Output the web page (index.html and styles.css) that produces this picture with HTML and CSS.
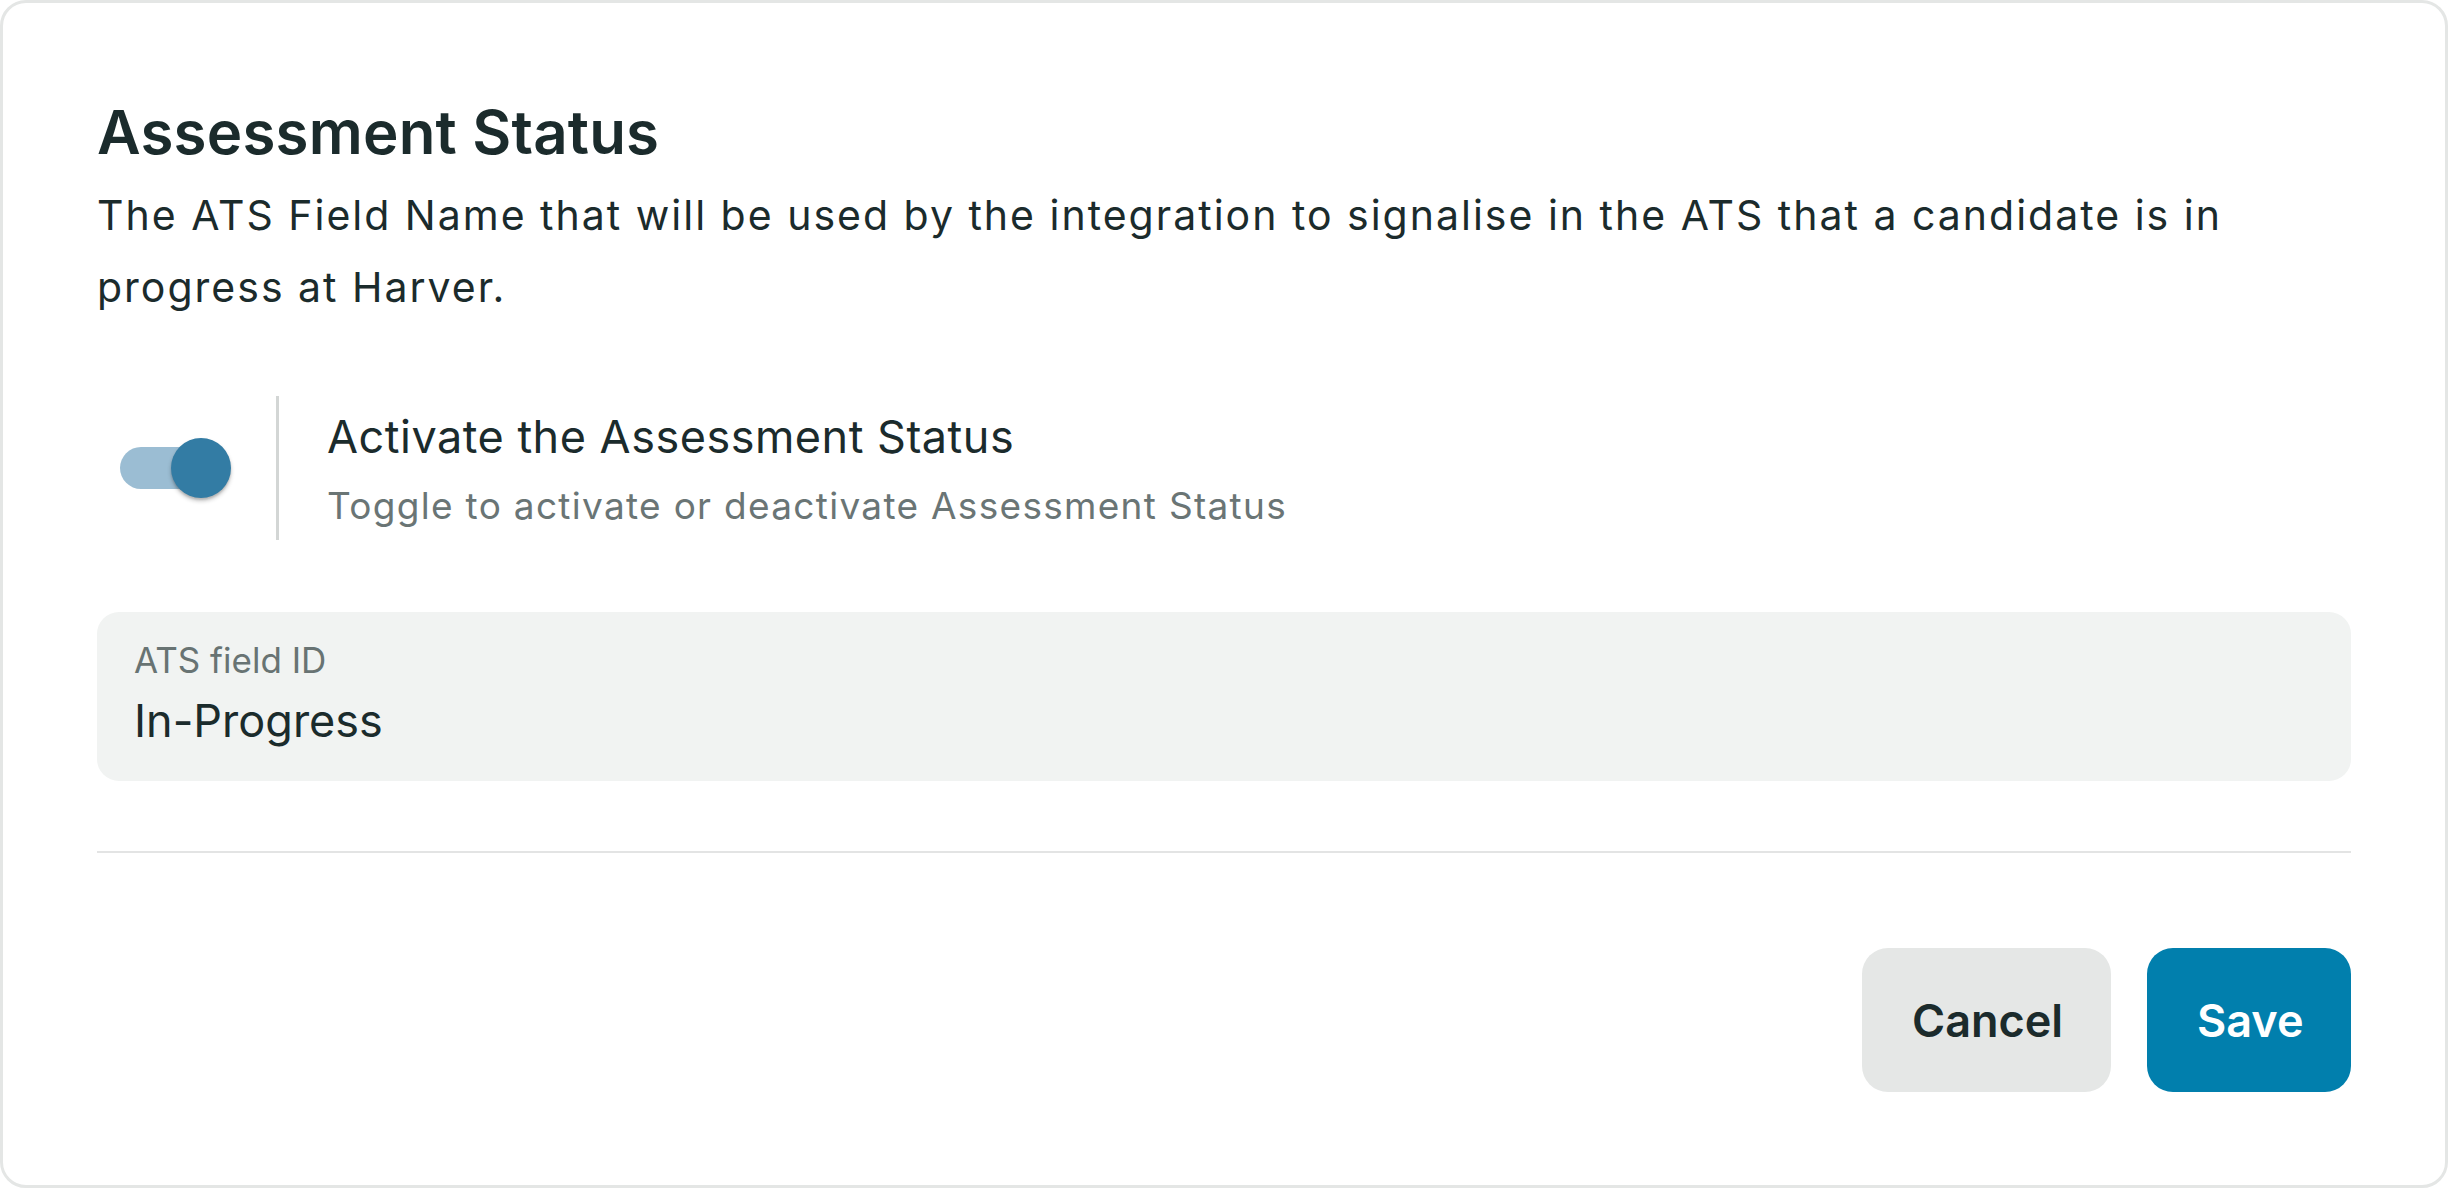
FILE: index.html
```html
<!DOCTYPE html>
<html lang="en">
<head>
<meta charset="utf-8">
<title>Assessment Status</title>
<link rel="stylesheet" href="styles.css">
</head>
<body>
<div class="card">
  <h1 class="title">Assessment Status</h1>
  <p class="desc">The ATS Field Name that will be used by the integration to signalise in the ATS that a candidate is in progress at Harver.</p>

  <div class="toggle-row">
    <div class="toggle-cell">
      <div class="switch">
        <span class="track"></span>
        <span class="thumb"></span>
      </div>
    </div>
    <div class="toggle-text">
      <div class="toggle-label">Activate the Assessment Status</div>
      <div class="toggle-sub">Toggle to activate or deactivate Assessment Status</div>
    </div>
  </div>

  <div class="field">
    <div class="field-label">ATS field ID</div>
    <div class="field-value">In-Progress</div>
  </div>

  <hr class="rule">

  <div class="actions">
    <button class="btn btn-cancel">Cancel</button>
    <button class="btn btn-save">Save</button>
  </div>
</div>
</body>
</html>
```

FILE: styles.css
```css
html, body {
  margin: 0;
  padding: 0;
  background: #ffffff;
}

body {
  font-family: Inter, "Noto Sans", "Liberation Sans", sans-serif;
  color: #1b2b2c;
}

.card {
  box-sizing: border-box;
  width: 2448px;
  height: 1188px;
  border: 3px solid #e4e6e5;
  border-radius: 26px;
  padding: 93px 94px 93px 94px;
  background: #ffffff;
  display: flex;
  flex-direction: column;
}

.title {
  margin: 0;
  font-size: 60px;
  font-weight: 600;
  line-height: 72px;
  color: #1b2b2c;
  letter-spacing: 0.2px;
}

.desc {
  margin: 11px 0 0 0;
  font-size: 41px;
  font-weight: 400;
  line-height: 72px;
  letter-spacing: 2px;
  color: #1b2b2c;
}

.toggle-row {
  margin-top: 73px;
  display: flex;
  align-items: stretch;
  height: 144px;
}

.toggle-cell {
  width: 179px;
  display: flex;
  align-items: center;
}

.switch {
  position: relative;
  margin-left: 23px;
  width: 111px;
  height: 60px;
}

.track {
  position: absolute;
  left: 0;
  top: 9px;
  width: 96px;
  height: 42px;
  border-radius: 21px;
  background: #9bbdd3;
}

.thumb {
  position: absolute;
  left: 51px;
  top: 0;
  width: 60px;
  height: 60px;
  border-radius: 50%;
  background: #337ca4;
  box-shadow: 0 3px 4px rgba(0, 0, 0, 0.22), 0 2px 2px rgba(0, 0, 0, 0.12);
}

.toggle-text {
  border-left: 3px solid #d3d6d5;
  padding: 7px 0 8px 48px;
  display: flex;
  flex-direction: column;
}

.toggle-label {
  font-size: 45px;
  line-height: 67.5px;
  letter-spacing: 0.5px;
  color: #1b2b2c;
}

.toggle-sub {
  margin-top: 9px;
  font-size: 37px;
  line-height: 52.5px;
  letter-spacing: 1.3px;
  color: #6a7575;
}

.field {
  margin-top: 72px;
  background: #f1f3f2;
  border-radius: 22px;
  padding: 22px 37px 27px 37px;
}

.field-label {
  font-size: 35px;
  line-height: 52.5px;
  color: #687373;
}

.field-value {
  font-size: 45px;
  line-height: 67.5px;
  color: #1b2b2c;
}

.rule {
  margin: 70px 0 0 0;
  border: 0;
  height: 3px;
  background: #e3e4e4;
}

.actions {
  margin-top: 95px;
  display: flex;
  justify-content: flex-end;
  gap: 36px;
}

.btn {
  height: 144px;
  border: 0;
  border-radius: 26px;
  padding: 0 50px;
  font-family: Inter, "Noto Sans", "Liberation Sans", sans-serif;
  font-size: 45px;
  font-weight: 600;
  cursor: pointer;
}

.btn-cancel {
  width: 249px;
  background: #e5e7e6;
  color: #1b2b2c;
}

.btn-save {
  width: 204px;
  background: #017fad;
  color: #ffffff;
}
```
